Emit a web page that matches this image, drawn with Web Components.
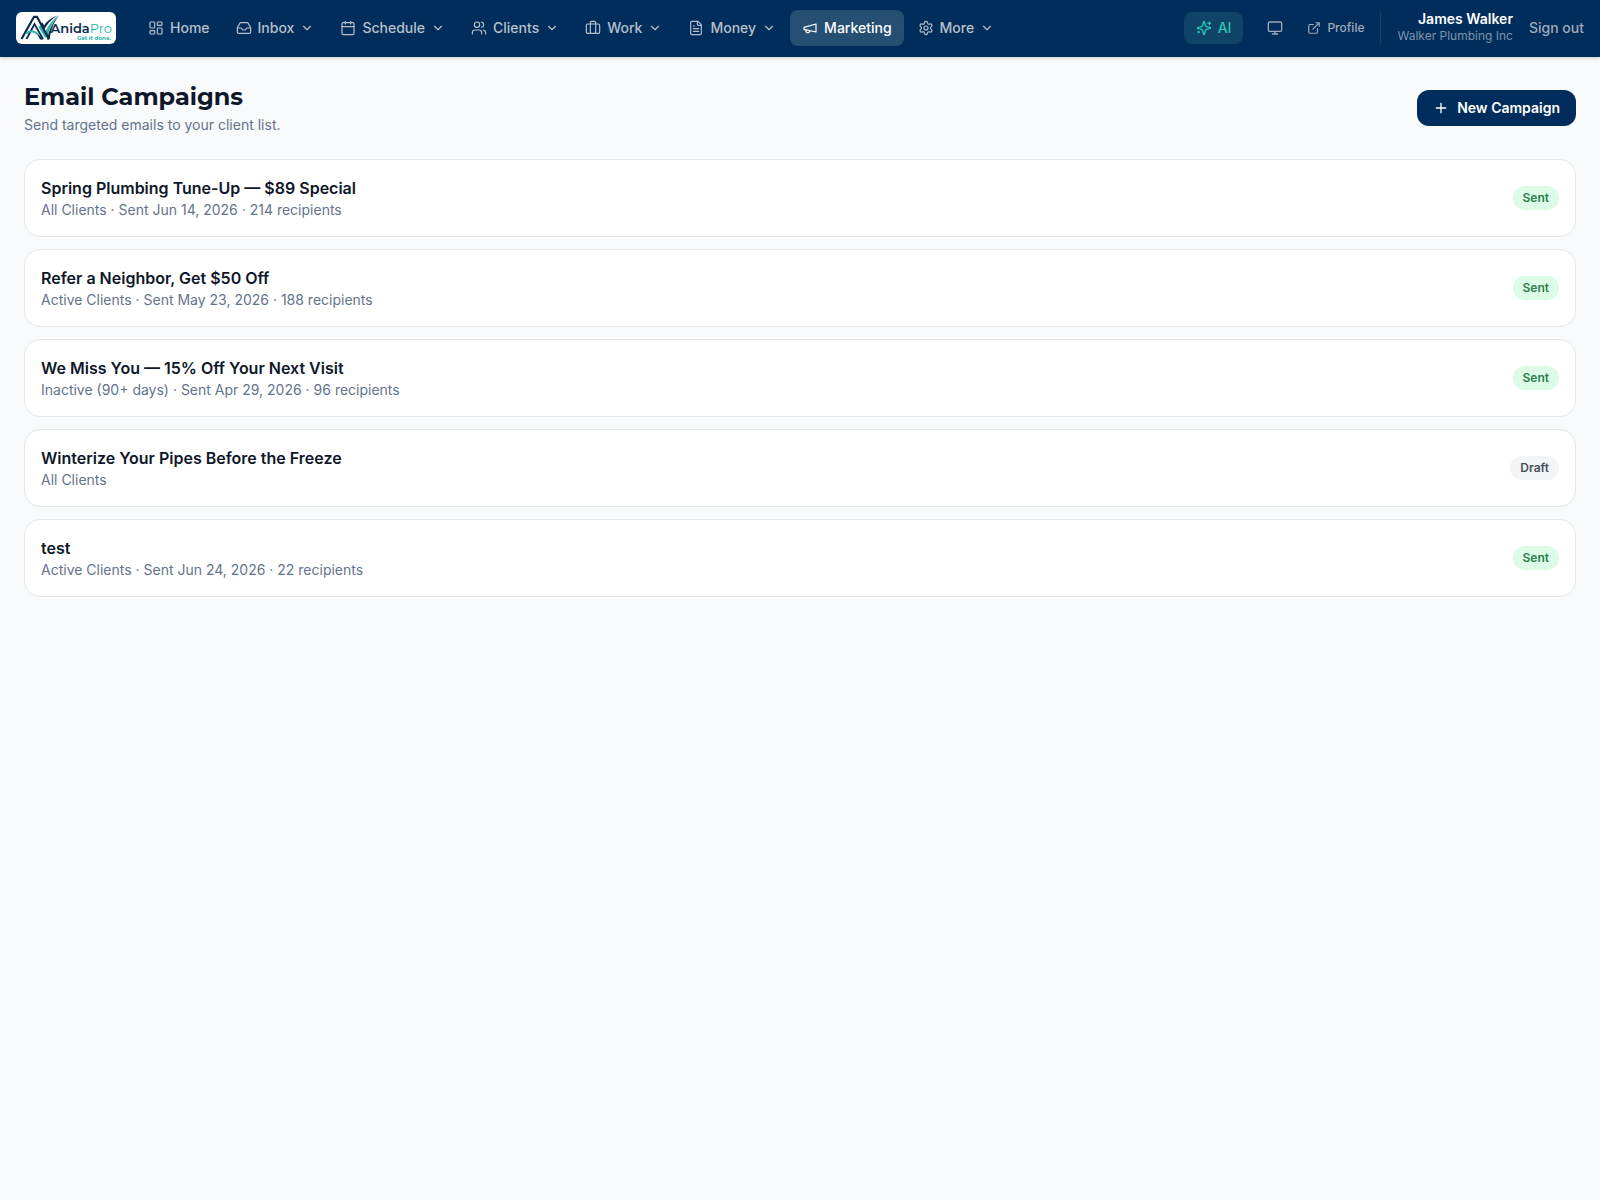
<!DOCTYPE html>
<html lang="en">
<head>
<meta charset="utf-8">
<title>Email Campaigns</title>
<style>
  body { margin: 0; background: #f9fafc; font-family: Inter, "Liberation Sans", sans-serif; font-size: 14px; line-height: 20px; color: #0f172a; }
</style>
</head>
<body>
<app-shell>
  <top-bar slot="header">
    <nav-item icon="dashboard" label="Home" href="#home"></nav-item>
    <nav-item icon="inbox" label="Inbox" menu></nav-item>
    <nav-item icon="calendar" label="Schedule" menu></nav-item>
    <nav-item icon="users" label="Clients" menu></nav-item>
    <nav-item icon="briefcase" label="Work" menu></nav-item>
    <nav-item icon="file" label="Money" menu></nav-item>
    <nav-item icon="megaphone" label="Marketing" href="#marketing" active></nav-item>
    <nav-item icon="settings" label="More" menu></nav-item>
    <user-tools slot="tools" name="James Walker" company="Walker Plumbing Inc"></user-tools>
  </top-bar>
  <page-heading>
    <span slot="title">Email Campaigns</span>
    <span slot="subtitle">Send targeted emails to your client list.</span>
    <primary-button slot="action" icon="plus">New Campaign</primary-button>
  </page-heading>
  <campaign-list>
    <campaign-card status="Sent"><span slot="name">Spring Plumbing Tune-Up — $89 Special</span>All Clients · Sent Jun 14, 2026 · 214 recipients</campaign-card>
    <campaign-card status="Sent"><span slot="name">Refer a Neighbor, Get $50 Off</span>Active Clients · Sent May 23, 2026 · 188 recipients</campaign-card>
    <campaign-card status="Sent"><span slot="name">We Miss You — 15% Off Your Next Visit</span>Inactive (90+ days) · Sent Apr 29, 2026 · 96 recipients</campaign-card>
    <campaign-card status="Draft"><span slot="name">Winterize Your Pipes Before the Freeze</span>All Clients</campaign-card>
    <campaign-card status="Sent"><span slot="name">test</span>Active Clients · Sent Jun 24, 2026 · 22 recipients</campaign-card>
  </campaign-list>
</app-shell>

<script>
const ICONS = {
  dashboard: '<rect x="3" y="3" width="7" height="9" rx="1"/><rect x="14" y="3" width="7" height="5" rx="1"/><rect x="14" y="12" width="7" height="9" rx="1"/><rect x="3" y="16" width="7" height="5" rx="1"/>',
  inbox: '<path d="M22 12h-6l-2 3h-4l-2-3H2"/><path d="M5.45 5.11 2 12v6a2 2 0 0 0 2 2h16a2 2 0 0 0 2-2v-6l-3.45-6.89A2 2 0 0 0 16.76 4H7.24a2 2 0 0 0-1.79 1.11z"/>',
  calendar: '<path d="M8 2v4M16 2v4"/><rect x="3" y="4" width="18" height="18" rx="2"/><path d="M3 10h18"/>',
  users: '<path d="M16 21v-2a4 4 0 0 0-4-4H6a4 4 0 0 0-4 4v2"/><circle cx="9" cy="7" r="4"/><path d="M22 21v-2a4 4 0 0 0-3-3.87M16 3.13a4 4 0 0 1 0 7.75"/>',
  briefcase: '<path d="M16 20V4a2 2 0 0 0-2-2h-4a2 2 0 0 0-2 2v16"/><rect x="2" y="6" width="20" height="14" rx="2"/>',
  file: '<path d="M15 2H6a2 2 0 0 0-2 2v16a2 2 0 0 0 2 2h12a2 2 0 0 0 2-2V7Z"/><path d="M14 2v4a2 2 0 0 0 2 2h4M10 9H8M16 13H8M16 17H8"/>',
  megaphone: '<path d="m3 11 18-5v12L3 14v-3z"/><path d="M11.6 16.8a3 3 0 1 1-5.8-1.6"/>',
  settings: '<path d="M12.22 2h-.44a2 2 0 0 0-2 2v.18a2 2 0 0 1-1 1.73l-.43.25a2 2 0 0 1-2 0l-.15-.08a2 2 0 0 0-2.73.73l-.22.38a2 2 0 0 0 .73 2.73l.15.1a2 2 0 0 1 1 1.72v.51a2 2 0 0 1-1 1.74l-.15.09a2 2 0 0 0-.73 2.73l.22.38a2 2 0 0 0 2.73.73l.15-.08a2 2 0 0 1 2 0l.43.25a2 2 0 0 1 1 1.73V20a2 2 0 0 0 2 2h.44a2 2 0 0 0 2-2v-.18a2 2 0 0 1 1-1.73l.43-.25a2 2 0 0 1 2 0l.15.08a2 2 0 0 0 2.73-.73l.22-.39a2 2 0 0 0-.73-2.73l-.15-.08a2 2 0 0 1-1-1.74v-.5a2 2 0 0 1 1-1.74l.15-.09a2 2 0 0 0 .73-2.73l-.22-.38a2 2 0 0 0-2.73-.73l-.15.08a2 2 0 0 1-2 0l-.43-.25a2 2 0 0 1-1-1.73V4a2 2 0 0 0-2-2z"/><circle cx="12" cy="12" r="3"/>',
  chevron: '<path d="m6 9 6 6 6-6"/>',
  sparkles: '<path d="M9.937 15.5A2 2 0 0 0 8.5 14.063l-6.135-1.582a.5.5 0 0 1 0-.962L8.5 9.936A2 2 0 0 0 9.937 8.5l1.582-6.135a.5.5 0 0 1 .963 0L14.063 8.5A2 2 0 0 0 15.5 9.937l6.135 1.581a.5.5 0 0 1 0 .964L15.5 14.063a2 2 0 0 0-1.437 1.437l-1.582 6.135a.5.5 0 0 1-.963 0z"/><path d="M20 3v4M22 5h-4M4 17v2M5 18H3"/>',
  monitor: '<rect x="2" y="3" width="20" height="14" rx="2"/><path d="M8 21h8M12 17v4"/>',
  external: '<path d="M15 3h6v6M10 14 21 3M18 13v6a2 2 0 0 1-2 2H5a2 2 0 0 1-2-2V8a2 2 0 0 1 2-2h6"/>',
  plus: '<path d="M5 12h14M12 5v14"/>'
};

class BaseElement extends HTMLElement {
  connectedCallback() {
    if (!this.shadowRoot) this.attachShadow({ mode: 'open' }).innerHTML = this.render();
  }
}

customElements.define('ui-icon', class extends BaseElement {
  render() {
    return `<style>
      :host { display: block; flex: none; width: 16px; height: 16px; }
      :host([size="small"]) { width: 14px; height: 14px; }
      svg { display: block; width: 100%; height: 100%; }
    </style>
    <svg viewBox="0 0 24 24" fill="none" stroke="currentColor" stroke-width="${this.getAttribute('weight') || 2}" stroke-linecap="round" stroke-linejoin="round" aria-hidden="true">${ICONS[this.getAttribute('name')]}</svg>`;
  }
});

customElements.define('app-shell', class extends BaseElement {
  render() {
    return `<style>
      :host { display: block; min-height: 100vh; }
      main { padding: 24px; display: flex; flex-direction: column; gap: 24px; }
    </style>
    <slot name="header"></slot><main><slot></slot></main>`;
  }
});

customElements.define('brand-logo', class extends BaseElement {
  render() {
    return `<style>
      :host { display: block; flex: none; }
      a { display: block; background: #fff; border-radius: 6px; }
      svg { display: block; width: 100px; height: 32px; }
      text { font-family: Montserrat, Inter, sans-serif; }
    </style>
    <a href="#home" aria-label="AnidaPro">
      <svg viewBox="0 0 100 32">
        <path d="M24.500 13.500 29 21C32 14 36 8 42.500 3.500 37 9 33 18 31 25.500h-2L22.500 15Z" fill="#23b5ac"/>
        <g fill="none" stroke="#0b2a4e">
          <path d="M5.500 27 18 4.800H21L33 27" stroke-width="2.200"/>
          <path d="M10.500 27 18.500 12 27 27" stroke-width="1.800"/>
        </g>
        <path d="M24 27.500 20.500 20.500l7 7ZM31 27.500C33 18 37 9 43.500 3 37.500 10 35 18 33.500 27.500Z" fill="#0b2a4e"/>
        <path d="M24.500 11.500 28.500 17C31 12.500 35.500 6.500 42 3.500 36 5 31 9 28 13.500L26.500 10.500Z" fill="#0b2a4e"/>
        <path d="M10 21.500c3.500-3 8-3 12.500 1" fill="none" stroke="#23b5ac" stroke-width="1.800"/>
        <text x="34.500" y="21" font-size="13" font-weight="600" fill="#0b2a4e">Anida<tspan font-weight="400" fill="#23b5ac">Pro</tspan></text>
        <text x="95" y="28" font-size="5.600" font-weight="700" text-anchor="end" fill="#23b5ac">Get it done.</text>
      </svg>
    </a>`;
  }
});

customElements.define('top-bar', class extends BaseElement {
  render() {
    return `<style>
      :host { display: block; background: #002d5b; border-bottom: 1px solid #002d5b; box-shadow: 0 1px 3px rgba(0,0,0,.12), 0 2px 4px rgba(0,0,0,.06); }
      header { display: flex; align-items: center; height: 56px; padding: 0 16px; box-sizing: border-box; }
      nav { display: flex; gap: 2px; margin-left: 20px; }
      slot[name="tools"] { display: block; margin-left: auto; }
    </style>
    <header><brand-logo></brand-logo><nav aria-label="Main"><slot></slot></nav><slot name="tools"></slot></header>`;
  }
});

customElements.define('nav-item', class extends BaseElement {
  render() {
    const inner = `<ui-icon name="${this.getAttribute('icon')}" weight="1.75"></ui-icon><span>${this.getAttribute('label')}</span>`;
    const control = this.hasAttribute('menu')
      ? `<button type="button" aria-haspopup="true">${inner}<ui-icon name="chevron" size="small"></ui-icon></button>`
      : `<a href="${this.getAttribute('href')}">${inner}</a>`;
    return `<style>
      :host { display: block; }
      a, button { display: flex; align-items: center; gap: 6px; padding: 8px 12px; border: 0; border-radius: 8px; background: none; color: #b9c0c9; font: 500 14px/20px Inter, sans-serif; text-decoration: none; white-space: nowrap; }
      :host([active]) a { background: #264f74; color: #fff; }
    </style>${control}`;
  }
});

customElements.define('user-tools', class extends BaseElement {
  render() {
    return `<style>
      :host { display: flex; align-items: center; }
      button, a { display: flex; align-items: center; gap: 6px; border: 0; background: none; padding: 0; font: 500 14px/20px Inter, sans-serif; color: #a0abb9; text-decoration: none; white-space: nowrap; }
      .ai { background: #0f4368; color: #2ec4b6; padding: 6px 12px; border-radius: 8px; margin-right: 16px; }
      .screen { padding: 8px; margin-right: 16px; }
      .profile { font-size: 12px; line-height: 16px; margin-right: 16px; }
      .user { border-left: 1px solid #0f4268; padding-left: 16px; margin-right: 16px; text-align: right; }
      .name { color: #fff; font-weight: 600; line-height: 14px; margin-bottom: 2px; }
      .company { color: #7f93a9; font-size: 12px; line-height: 16px; }
    </style>
    <button class="ai" type="button"><ui-icon name="sparkles"></ui-icon>AI</button>
    <button class="screen" type="button" aria-label="Display"><ui-icon name="monitor"></ui-icon></button>
    <a class="profile" href="#profile"><ui-icon name="external" size="small"></ui-icon>Profile</a>
    <div class="user"><div class="name">${this.getAttribute('name')}</div><div class="company">${this.getAttribute('company')}</div></div>
    <button class="out" type="button">Sign out</button>`;
  }
});

customElements.define('page-heading', class extends BaseElement {
  render() {
    return `<style>
      :host { display: flex; align-items: center; justify-content: space-between; }
      h1 { margin: 0 0 2px; font: 700 24px/32px Montserrat, Inter, sans-serif; }
      p { margin: 0; color: #64748b; }
    </style>
    <div><h1><slot name="title"></slot></h1><p><slot name="subtitle"></slot></p></div><slot name="action"></slot>`;
  }
});

customElements.define('primary-button', class extends BaseElement {
  render() {
    return `<style>
      :host { display: block; }
      button { display: flex; align-items: center; gap: 8px; padding: 8px 16px; border: 0; border-radius: 12px; background: #002d5b; color: #fff; font: 600 14px/20px Inter, sans-serif; }
    </style>
    <button type="button"><ui-icon name="${this.getAttribute('icon')}"></ui-icon><slot></slot></button>`;
  }
});

customElements.define('campaign-list', class extends BaseElement {
  render() {
    return `<style>:host { display: flex; flex-direction: column; gap: 12px; }</style><slot></slot>`;
  }
});

customElements.define('campaign-card', class extends BaseElement {
  render() {
    return `<style>
      :host { display: flex; align-items: center; justify-content: space-between; gap: 16px; padding: 16px; border: 1px solid #e5e7eb; border-radius: 16px; background: #fff; }
      h2 { margin: 0; font-size: 16px; line-height: 24px; font-weight: 600; }
      p { margin: 0; color: #64748b; }
      .status { padding: 4px 10px; border-radius: 12px; background: #dcfce7; color: #2f7d4f; font-size: 12px; line-height: 16px; font-weight: 600; }
      :host([status="Draft"]) .status { background: #f3f4f6; color: #475060; }
    </style>
    <div><h2><slot name="name"></slot></h2><p><slot></slot></p></div>
    <span class="status">${this.getAttribute('status')}</span>`;
  }
});
</script>
</body>
</html>
